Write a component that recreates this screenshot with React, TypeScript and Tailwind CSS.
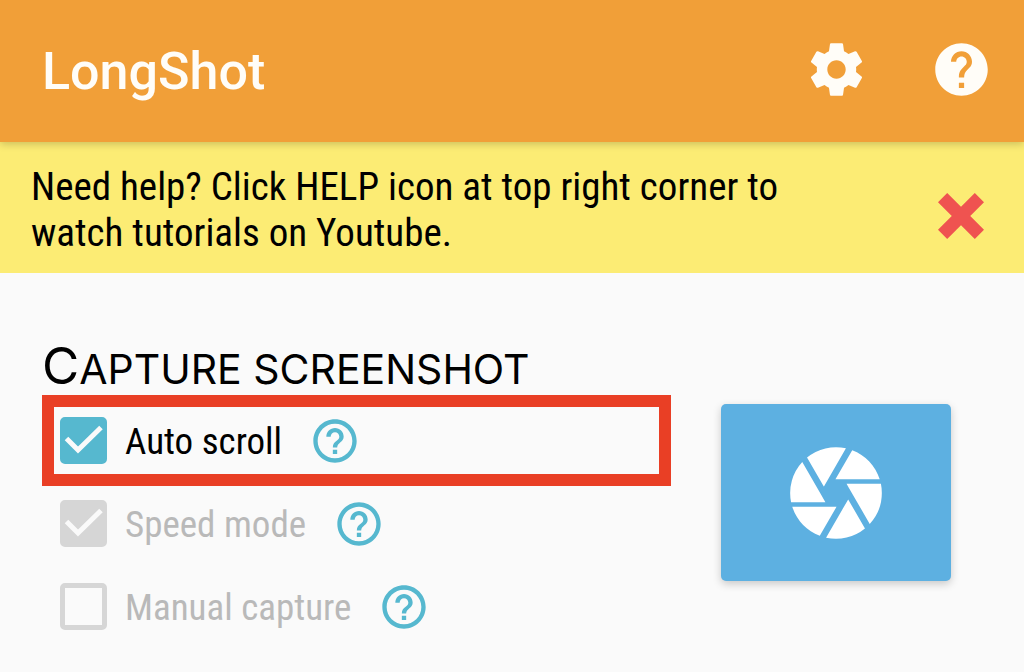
import React, { useState } from 'react';
import { MdCamera, MdHelp, MdHelpOutline } from 'react-icons/md';

interface OptionRowProps {
  id: string;
  label: string;
  checked: boolean;
  disabled?: boolean;
  highlighted?: boolean;
  onChange: (checked: boolean) => void;
}

const SettingsIcon: React.FC = () => (
  <svg viewBox="0 0 24 24" className="w-[63px] h-[63px]" fill="currentColor" aria-hidden="true">
    <path d="M19.43 12.98c.04-.32.07-.64.07-.98s-.03-.66-.07-.98l2.11-1.65c.19-.15.24-.42.12-.64l-2-3.46c-.12-.22-.39-.3-.61-.22l-2.49 1c-.52-.4-1.08-.73-1.69-.98l-.38-2.65C14.46 2.18 14.25 2 14 2h-4c-.25 0-.46.18-.49.42l-.38 2.65c-.61.25-1.17.59-1.69.98l-2.49-1c-.23-.09-.49 0-.61.22l-2 3.46c-.13.22-.07.49.12.64l2.11 1.65c-.04.32-.07.65-.07.98s.03.66.07.98l-2.11 1.65c-.19.15-.24.42-.12.64l2 3.46c.12.22.39.3.61.22l2.49-1c.52.4 1.08.73 1.69.98l.38 2.65c.03.24.24.42.49.42h4c.25 0 .46-.18.49-.42l.38-2.65c.61-.25 1.17-.59 1.69-.98l2.49 1c.23.09.49 0 .61-.22l2-3.46c.12-.22.07-.49-.12-.64l-2.11-1.65zM12 15.5c-1.93 0-3.5-1.57-3.5-3.5s1.57-3.5 3.5-3.5 3.5 1.57 3.5 3.5-1.57 3.5-3.5 3.5z" />
  </svg>
);

const OptionRow: React.FC<OptionRowProps> = ({ id, label, checked, disabled, highlighted, onChange }) => (
  <div
    className={`flex items-center h-[67px] pl-[6px] ${
      highlighted ? 'outline-solid outline-[12px] outline-[#e93f25]' : ''
    }`}
  >
    <span className="grid shrink-0">
      <input
        id={id}
        type="checkbox"
        checked={checked}
        disabled={disabled}
        onChange={(e) => onChange(e.target.checked)}
        className="col-start-1 row-start-1 w-[47px] h-[47px] appearance-none rounded-[5px] border-[5px] border-[#56b8cf] checked:bg-[#56b8cf] disabled:border-[#d6d6d6] disabled:checked:bg-[#d6d6d6]"
      />
      {checked && (
        <svg viewBox="0 0 47 47" className="col-start-1 row-start-1 w-[47px] h-[47px] pointer-events-none" fill="none" stroke="#fafafa" strokeWidth="5">
          <path d="M6.5 21.5 18 33 41 10.5" />
        </svg>
      )}
    </span>
    <label htmlFor={id} className={`ml-[18px] pt-0.5 text-[37px] font-[Roboto_Condensed,Roboto,sans-serif] ${disabled ? 'text-[#b9b9b9]' : 'text-black'}`}>
      {label}
    </label>
    <button type="button" aria-label={`Help for ${label}`} className="ml-[27px] text-[#56b8cf]">
      <MdHelpOutline className="w-[52px] h-[52px]" />
    </button>
  </div>
);

const App: React.FC = () => {
  const [showHint, setShowHint] = useState(true);
  const [autoScroll, setAutoScroll] = useState(true);
  const [speedMode, setSpeedMode] = useState(true);
  const [manual, setManual] = useState(false);

  return (
    <div className="min-h-screen bg-[#fafafa] text-black font-[Roboto,sans-serif]">
      <header className="relative flex items-center justify-between h-[142px] pl-[42px] pr-[31px] pb-1 bg-[#f19f38] text-[#fffdf8] shadow-[0_2px_8px_rgba(0,0,0,0.2)]">
        <h1 className="pt-1.5 text-[52px] font-medium">LongShot</h1>
        <div className="flex gap-[62px]">
          <button type="button" aria-label="Settings">
            <SettingsIcon />
          </button>
          <button type="button" aria-label="Help">
            <MdHelp className="w-[63px] h-[63px]" />
          </button>
        </div>
      </header>

      {showHint && (
        <section className="flex items-center justify-between h-[131px] pl-[31px] pr-10 bg-[#fcec74]">
          <p className="max-w-[760px] pt-1 text-[39px] leading-[46px] font-[Roboto_Condensed,Roboto,sans-serif]">
            Need help? Click HELP icon at top right corner to watch tutorials on Youtube.
          </p>
          <button type="button" aria-label="Dismiss" onClick={() => setShowHint(false)} className="pt-4">
            <svg viewBox="0 0 46 46" className="w-[46px] h-[46px]" stroke="#ef5350" strokeWidth="13">
              <path d="M4.6 4.6 41.4 41.4M41.4 4.6 4.6 41.4" />
            </svg>
          </button>
        </section>
      )}

      <main className="pt-16">
        <h2 className="pl-[42px] text-[41px] leading-[58px] uppercase first-letter:text-[51px] font-[Inter,sans-serif]">
          Capture screenshot
        </h2>
        <div className="flex items-start gap-[62px] pl-[54px] pr-[73px] pt-1.5">
          <div className="flex flex-col flex-1 gap-4 pt-[3px]">
            <OptionRow id="auto-scroll" label="Auto scroll" checked={autoScroll} highlighted onChange={setAutoScroll} />
            <OptionRow id="speed-mode" label="Speed mode" checked={speedMode} disabled onChange={setSpeedMode} />
            <OptionRow id="manual-capture" label="Manual capture" checked={manual} disabled onChange={setManual} />
          </div>
          <button
            type="button"
            aria-label="Start capture"
            className="flex items-center justify-center shrink-0 w-[230px] h-[177px] rounded-[5px] bg-[#5db0e1] text-white shadow-[0_3px_8px_rgba(0,0,0,0.2)]"
          >
            <MdCamera className="w-[110px] h-[110px]" />
          </button>
        </div>
      </main>
    </div>
  );
};

export default App;
